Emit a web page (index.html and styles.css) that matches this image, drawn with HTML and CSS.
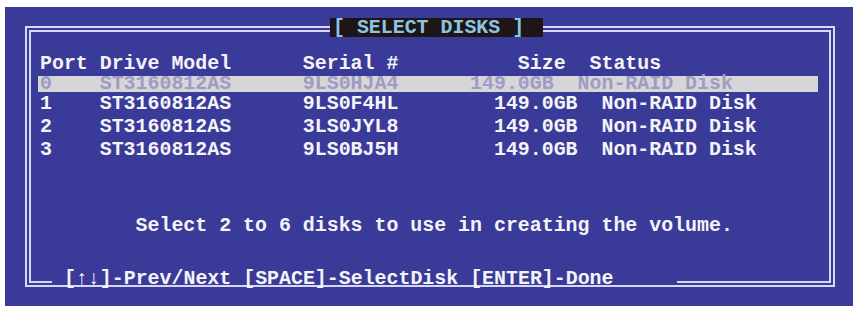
FILE: index.html
```html
<!DOCTYPE html>
<html>
<head>
<meta charset="utf-8">
<link rel="stylesheet" href="styles.css">
</head>
<body>
<div class="screen">
  <div class="frame">
    <div class="title">[ SELECT DISKS ]</div>
    <div class="box">
      <div class="line head">Port Drive Model      Serial #          Size  Status</div>
      <div class="line sel">0    ST3160812AS      9LS0HJA4      149.0GB  Non-RAID Disk</div>
      <div class="line row">1    ST3160812AS      9LS0F4HL        149.0GB  Non-RAID Disk</div>
      <div class="line row">2    ST3160812AS      3LS0JYL8        149.0GB  Non-RAID Disk</div>
      <div class="line row">3    ST3160812AS      9LS0BJ5H        149.0GB  Non-RAID Disk</div>
      <div class="line msg">Select 2 to 6 disks to use in creating the volume.</div>
      <div class="foot">
        <div class="seg seg-left"></div>
        <div class="keys">[↑↓]-Prev/Next [SPACE]-SelectDisk [ENTER]-Done</div>
        <div class="seg seg-right"></div>
      </div>
    </div>
  </div>
</div>
</body>
</html>
```
FILE: styles.css
```css
html, body {
  margin: 0;
  padding: 0;
  background: #ffffff;
}

body {
  font-family: "Liberation Mono", "DejaVu Sans Mono", monospace;
  font-weight: bold;
  font-size: 19.92px;
  color: #f4f4f8;
}

.screen {
  margin: 7px 0 0 5px;
  width: 848px;
  height: 299px;
  background: #3a3a99;
  padding: 19px 0 0 20px;
  box-sizing: border-box;
}

.frame {
  position: relative;
  width: 810px;
  height: 261px;
  border: 2px solid #d6d7f3;
  padding: 2px;
  box-sizing: border-box;
}

.title {
  position: absolute;
  left: 303px;
  top: -10px;
  width: 213px;
  height: 19px;
  line-height: 19px;
  padding-left: 3px;
  box-sizing: border-box;
  background: #1e1616;
  color: #8cc4e4;
  white-space: pre;
}

.box {
  height: 100%;
  border: 2px solid #d6d7f3;
  border-bottom: 0;
  box-sizing: border-box;
  display: flex;
  flex-direction: column;
  padding-top: 21px;
}

.line {
  white-space: pre;
  padding-left: 9px;
  height: 22px;
  line-height: 22px;
}

.sel {
  margin: 1px 0 0 7px;
  width: 780px;
  padding-left: 2px;
  height: 16px;
  line-height: 16px;
  box-sizing: border-box;
  background: #d6d6d8;
  color: #9c9cc4;
}

.row {
  height: 23px;
  line-height: 23px;
}

.msg {
  margin-top: 54px;
  padding-left: calc(9px + 8ch);
}

.foot {
  margin-top: auto;
  height: 22px;
  display: flex;
  align-items: flex-end;
}

.seg {
  border-bottom: 2px solid #d6d7f3;
}

.seg-left {
  width: 21px;
}

.seg-right {
  flex: 1;
}

.keys {
  width: 625px;
  flex: none;
  height: 22px;
  line-height: 22px;
  padding-left: 12px;
  box-sizing: border-box;
  margin-bottom: -7px;
  white-space: pre;
}
```
